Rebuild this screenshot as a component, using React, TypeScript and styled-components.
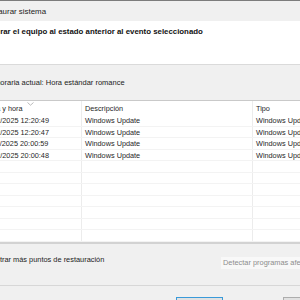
import styled, { createGlobalStyle } from "styled-components";

const GlobalStyle = createGlobalStyle`
  html, body {
    margin: 0;
    padding: 0;
    background: #f0f0f0;
  }
`;

const Viewport = styled.div`
  width: 300px;
  height: 300px;
  overflow: hidden;
  background: #f0f0f0;
`;

const Dialog = styled.div`
  margin-left: -40px;
  width: 400px;
  display: flex;
  flex-direction: column;
  font-family: "Liberation Sans", Arial, sans-serif;
  color: #1e1e1e;
`;

const TitleBar = styled.div`
  height: 20px;
  border-top: 1px solid #7c7c7c;
  background: #f0f0f0;
  padding-left: 22px;
  display: flex;
  align-items: center;
  font-size: 7.9px;
  color: #222;
`;

const HeadArea = styled.div`
  height: 44px;
  background: #fff;
  border-bottom: 1px solid #dadada;
  padding: 6px 0 0 14px;
  box-sizing: border-box;
`;

const Heading = styled.div`
  font-size: 7.85px;
  font-weight: 700;
  line-height: 10px;
  color: #111;
`;

const ZonePanel = styled.div`
  height: 35px;
  box-sizing: border-box;
  padding: 13px 0 0 17px;
  font-size: 7.5px;
  line-height: 10px;
  color: #222;
`;

const Table = styled.div`
  background: #fff;
  border-top: 1px solid #c9c9c9;
  border-bottom: 2px solid #d2d2d2;
`;

const Row = styled.div<{ $head?: boolean }>`
  display: grid;
  grid-template-columns: 122px 171px 1fr;
  height: ${(p) => (p.$head ? "14px" : "11.5px")};
  border-bottom: ${(p) => (p.$head ? "none" : "1px solid #f3f3f3")};
  box-sizing: border-box;
  position: relative;
`;

const Cell = styled.div<{ $last?: boolean }>`
  padding-left: 3px;
  border-right: ${(p) => (p.$last ? "none" : "1px solid #ececec")};
  font-size: 7.3px;
  line-height: 11px;
  white-space: nowrap;
  overflow: hidden;
  color: #1f1f1f;
`;

const FirstCell = styled(Cell)`
  padding-left: 22px;
`;

const HeadCell = styled(Cell)`
  line-height: 14px;
  padding-top: 1px;
`;

const HeadFirstCell = styled(HeadCell)`
  padding-left: 20px;
`;

const SortArrow = styled.svg`
  position: absolute;
  left: 67px;
  top: 1px;
`;

const Options = styled.div`
  height: 42px;
  box-sizing: border-box;
  display: flex;
  align-items: flex-start;
  justify-content: space-between;
  padding: 11px 0 0 0;
  border-bottom: 1px solid #d7d7d7;
`;

const CheckLabel = styled.label`
  display: flex;
  align-items: center;
  gap: 4px;
  font-size: 7.4px;
  line-height: 10px;
  color: #222;
  padding-left: 13px;
`;

const Check = styled.span`
  width: 9px;
  height: 9px;
  border: 1px solid #333;
  background: #fff;
  box-sizing: border-box;
`;

const GhostButton = styled.button`
  margin: 2px 0 0 0;
  width: 139px;
  height: 12px;
  padding: 0 0 0 2px;
  border: none;
  background: #f8f8f8;
  font-family: inherit;
  font-size: 7.4px;
  color: #8d8d8d;
  text-align: left;
  white-space: nowrap;
`;

const Footer = styled.div`
  height: 40px;
  display: flex;
  padding: 11px 0 0 216px;
  gap: 60px;
`;

const FooterButton = styled.button<{ $primary?: boolean }>`
  width: 47px;
  height: 14px;
  padding: 0;
  border: 1px solid ${(p) => (p.$primary ? "#3a9ad9" : "#adadad")};
  background: #e1e1e1;
  font-family: inherit;
  font-size: 7.4px;
  line-height: 14px;
`;

const rows = [
  ["12/02/2025 12:20:49", "Windows Update", "Windows Update"],
  ["12/02/2025 12:20:47", "Windows Update", "Windows Update"],
  ["11/02/2025 20:00:59", "Windows Update", "Windows Update"],
  ["05/02/2025 20:00:48", "Windows Update", "Windows Update"],
  ["", "", ""],
  ["", "", ""],
  ["", "", ""],
  ["", "", ""],
  ["", "", ""],
  ["", "", ""],
  ["", "", ""],
];

const App = () => {
  return (
    <Viewport>
      <GlobalStyle />
      <Dialog>
        {/* Title */}
        <TitleBar>Restaurar sistema</TitleBar>

        {/* Heading */}
        <HeadArea>
          <Heading>Restaurar el equipo al estado anterior al evento seleccionado</Heading>
        </HeadArea>

        {/* Time zone */}
        <ZonePanel>Zona horaria actual: Hora estándar romance</ZonePanel>

        {/* Restore points */}
        <Table>
          <Row $head>
            <HeadFirstCell>Fecha y hora</HeadFirstCell>
            <HeadCell>Descripción</HeadCell>
            <HeadCell $last>Tipo</HeadCell>
            <SortArrow width="7" height="4" viewBox="0 0 7 4">
              <path d="M0.5 0.5 L3.5 3.2 L6.5 0.5" fill="none" stroke="#a8a8a8" strokeWidth="0.8" />
            </SortArrow>
          </Row>
          {rows.map((r, i) => (
            <Row key={i}>
              <FirstCell>{r[0]}</FirstCell>
              <Cell>{r[1]}</Cell>
              <Cell $last>{r[2]}</Cell>
            </Row>
          ))}
        </Table>

        {/* Options */}
        <Options>
          <CheckLabel>
            <Check />
            <span>Mostrar más puntos de restauración</span>
          </CheckLabel>
          <GhostButton disabled>Detectar programas afectados</GhostButton>
        </Options>

        {/* Footer buttons */}
        <Footer>
          <FooterButton $primary>Siguiente &gt;</FooterButton>
          <FooterButton>Cancelar</FooterButton>
        </Footer>
      </Dialog>
    </Viewport>
  );
};

export default App;
